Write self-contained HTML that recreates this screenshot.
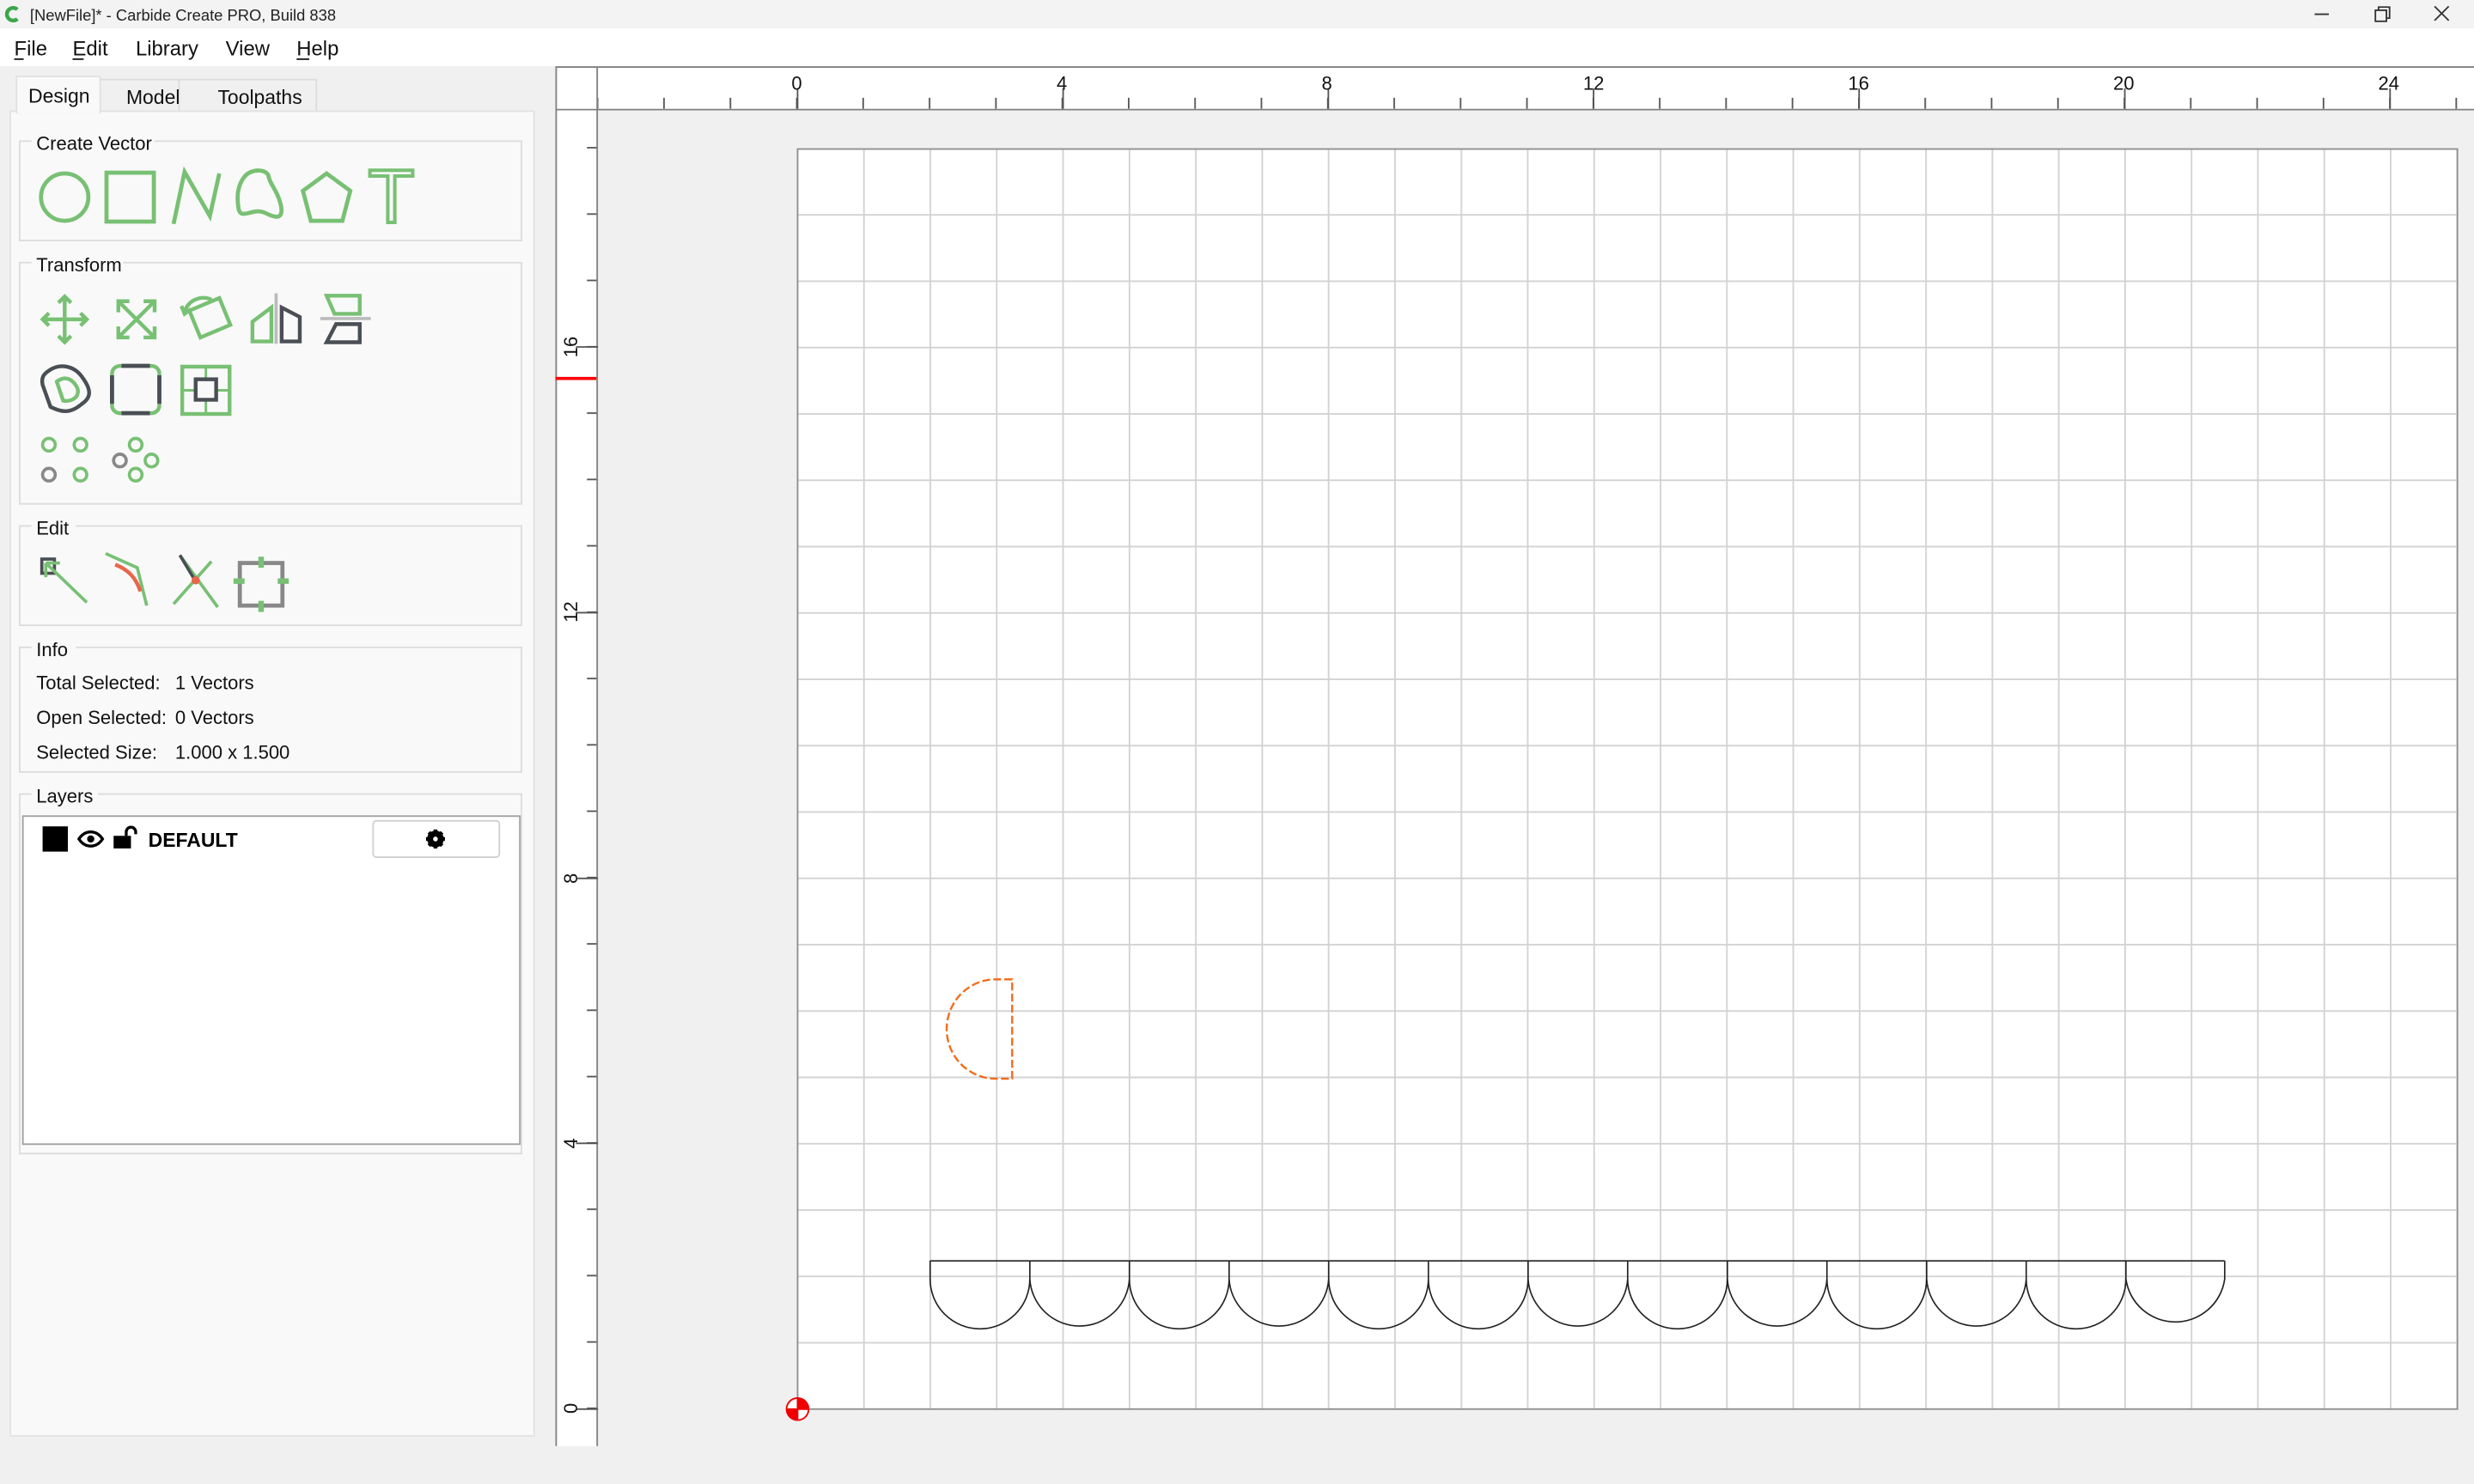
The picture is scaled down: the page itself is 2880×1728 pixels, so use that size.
<!DOCTYPE html>
<html><head><meta charset="utf-8"><style>
html,body{margin:0;padding:0;width:2880px;height:1728px;overflow:hidden;background:#f0f0f0}
svg{display:block}
text{font-family:"Liberation Sans",sans-serif}
</style></head><body>
<svg width="2880" height="1728" viewBox="0 0 1568 941" preserveAspectRatio="none">
<defs>
<pattern id="grid" patternUnits="userSpaceOnUse" x="505" y="893" width="42.07" height="42.07">
<path d="M0.5 0V42.07M0 0.5H42.07" stroke="#d2d2d2" stroke-width="1" fill="none"/>
</pattern>
<pattern id="tt" patternUnits="userSpaceOnUse" x="504.5" y="0" width="42.07" height="941">
<path d="M0.5 62V69" stroke="#555" stroke-width="1"/>
</pattern>
<pattern id="lt" patternUnits="userSpaceOnUse" x="0" y="892.5" width="1568" height="42.07">
<path d="M372 0.5H379" stroke="#555" stroke-width="1"/>
</pattern>
</defs>
<!-- title bar -->
<rect x="0" y="0" width="1568" height="18" fill="#f3f3f3"/>
<path d="M11 6 A4 4 0 1 0 11 12" stroke="#3aa64a" stroke-width="2.4" fill="none"/>
<text x="19" y="13" font-size="10" fill="#222">[NewFile]* - Carbide Create PRO, Build 838</text>
<path d="M1467 9H1476" stroke="#333" stroke-width="1"/>
<rect x="1505.5" y="6.5" width="7" height="7" fill="none" stroke="#333"/><path d="M1507.5 6.5V4.5H1514.5V11.5H1512.5" fill="none" stroke="#333"/>
<path d="M1543 4L1552 13M1552 4L1543 13" stroke="#333" stroke-width="1"/>
<!-- menu -->
<rect x="0" y="18" width="1568" height="24" fill="#fff"/>
<g font-size="13" fill="#111">
<text x="9" y="35">File</text><text x="46" y="35">Edit</text><text x="86" y="35">Library</text><text x="143" y="35">View</text><text x="188" y="35">Help</text>
</g>
<path d="M9 37.5H15M46 37.5H53M188 37.5H196" stroke="#111" stroke-width="1"/>
<!-- tabs -->
<rect x="63.5" y="50.5" width="50" height="20" fill="#f0f0f0" stroke="#ddd"/>
<rect x="113.5" y="50.5" width="87" height="20" fill="#f0f0f0" stroke="#ddd"/>
<rect x="6.5" y="70.5" width="332" height="840" fill="#f9f9f9" stroke="#e2e2e2"/>
<rect x="10.5" y="48.5" width="53" height="23" fill="#f9f9f9" stroke="#e2e2e2"/>
<rect x="11" y="70" width="52" height="2" fill="#f9f9f9"/>
<g font-size="12.5" fill="#111">
<text x="18" y="65">Design</text><text x="80" y="66">Model</text><text x="138" y="66">Toolpaths</text>
</g>
<!-- group boxes -->
<g fill="none" stroke="#dcdcdc">
<rect x="12.5" y="89.5" width="318" height="63"/>
<rect x="12.5" y="166.5" width="318" height="153"/>
<rect x="12.5" y="333.5" width="318" height="63"/>
<rect x="12.5" y="410.5" width="318" height="79"/>
<rect x="12.5" y="503.5" width="318" height="228"/>
</g>
<g fill="#f9f9f9">
<rect x="20" y="83" width="78" height="12"/><rect x="20" y="160" width="58" height="12"/>
<rect x="20" y="327" width="28" height="12"/><rect x="20" y="404" width="28" height="12"/><rect x="20" y="497" width="42" height="12"/>
</g>
<g font-size="12" fill="#111">
<text x="23" y="95">Create Vector</text><text x="23" y="172">Transform</text><text x="23" y="339">Edit</text><text x="23" y="416">Info</text><text x="23" y="509">Layers</text>
<text x="23" y="437">Total Selected:</text><text x="111" y="437">1 Vectors</text>
<text x="23" y="459">Open Selected:</text><text x="111" y="459">0 Vectors</text>
<text x="23" y="481">Selected Size:</text><text x="111" y="481">1.000 x 1.500</text>
</g>
<!-- create vector icons -->
<g fill="none" stroke="#78c074" stroke-width="2.6">
<circle cx="41" cy="125" r="15"/>
<rect x="67.5" y="109.5" width="30" height="31"/>
<path d="M110 142L117 109L133 137L139 110"/>
<path d="M155 112C159 107 168 107 170 111C171 117 176 121 178 130C180 140 174 138 168 135C160 131 152 141 151 131C150 124 151 117 155 112Z"/>
<path d="M207 110L222 121L217 140H197L192 121Z"/>
</g>
<text x="248" y="141" font-family="Liberation Serif,serif" font-size="48" fill="#f9f9f9" stroke="#78c074" stroke-width="2.2" text-anchor="middle">T</text>
<!-- transform icons -->
<g fill="none" stroke="#78c074" stroke-width="2.4">
<path d="M41 188V217M27 202.5H55M37 192L41 188L45 192M37 213L41 217L45 213M31 198.5L27 202.5L31 206.5M51 198.5L55 202.5L51 206.5"/>
<path d="M75 191L98 214M98 191L75 214M75 198V191H82M91 191H98V198M75 207V214H82M91 214H98V207"/>
<path d="M120 197L139 189L146 206L127 214Z"/><path d="M117 198C119 190 128 187 134 190M115 194L117 199L121 196"/>
</g>
<path d="M175 186V218" stroke="#bbb" stroke-width="2"/>
<path d="M172 216.5H160V204L172 195Z" fill="none" stroke="#78c074" stroke-width="2.4"/>
<path d="M178.5 216.5H190V201L178.5 195Z" fill="none" stroke="#4a4f55" stroke-width="2.4"/>
<path d="M203 202H235" stroke="#bbb" stroke-width="2"/>
<path d="M207 187.5H228V199H212Z" fill="none" stroke="#78c074" stroke-width="2.4"/>
<path d="M213 205.5H228V217H207Z" fill="none" stroke="#4a4f55" stroke-width="2.4"/>
<path d="M31 235C38 230 47 232 52 239C58 247 58 252 52 256C44 263 38 261 32 258L27 244C26 239 28 237 31 235Z" fill="none" stroke="#4a4f55" stroke-width="2.4"/>
<path d="M36 242C41 238 46 240 49 246C51 252 45 255 40 254Z" fill="none" stroke="#78c074" stroke-width="2.4"/>
<rect x="71" y="232" width="30" height="30" rx="5" fill="none" stroke="#78c074" stroke-width="2.4"/>
<path d="M77 232H95M77 262H95M71 238V256M101 238V256" stroke="#4a4f55" stroke-width="2.6"/>
<rect x="115.5" y="232.5" width="30" height="30" fill="none" stroke="#78c074" stroke-width="2.4"/>
<path d="M130.5 232V262M115 247.5H146" stroke="#78c074" stroke-width="1.6"/>
<rect x="124" y="240.5" width="13" height="13" fill="#f9f9f9" stroke="#4a4f55" stroke-width="2.4"/>
<circle cx="31" cy="282" r="4" fill="none" stroke="#78c074" stroke-width="2"/>
<circle cx="51" cy="282" r="4" fill="none" stroke="#78c074" stroke-width="2"/>
<circle cx="31" cy="301" r="4" fill="none" stroke="#888" stroke-width="2"/>
<circle cx="51" cy="301" r="4" fill="none" stroke="#78c074" stroke-width="2"/>
<circle cx="86" cy="282" r="4" fill="none" stroke="#78c074" stroke-width="2"/>
<circle cx="76" cy="292" r="4" fill="none" stroke="#888" stroke-width="2"/>
<circle cx="96" cy="292" r="4" fill="none" stroke="#78c074" stroke-width="2"/>
<circle cx="86" cy="301" r="4" fill="none" stroke="#78c074" stroke-width="2"/>
<!-- edit icons -->
<rect x="26.5" y="354.5" width="8" height="9" fill="none" stroke="#4a4f55" stroke-width="2"/>
<path d="M29 357L55 382M29 357H38M29 357V366" fill="none" stroke="#78c074" stroke-width="2"/>
<path d="M67 351L87 360L93 384" fill="none" stroke="#78c074" stroke-width="2"/>
<path d="M73 358C81 361 86 366 89 375" fill="none" stroke="#e8664a" stroke-width="2.4"/>
<path d="M110 383L134 356M114 352L138 385" stroke="#78c074" stroke-width="2"/>
<path d="M114 352L123 367" stroke="#4a4f55" stroke-width="2"/>
<circle cx="124" cy="368" r="2.6" fill="#e8664a"/>
<rect x="152" y="357" width="27" height="27" fill="none" stroke="#888" stroke-width="2.6"/>
<path d="M165.5 353V360M165.5 381V388M148 368.5H155M176 368.5H183" stroke="#78c074" stroke-width="3.5"/>
<!-- layers list -->
<rect x="14.5" y="517.5" width="315" height="208" fill="#fff" stroke="#a0a0a0"/>
<rect x="27" y="524" width="16" height="16" fill="#000"/>
<path d="M50 532C54 526 61 526 65 532C61 538 54 538 50 532Z" fill="none" stroke="#000" stroke-width="1.8"/>
<circle cx="57.5" cy="532" r="2.3" fill="#000"/>
<rect x="72" y="530" width="11" height="8" fill="#000"/>
<path d="M80 530V527.5A3 3 0 0 1 86 527.5V529" fill="none" stroke="#000" stroke-width="1.8"/>
<text x="94" y="537" font-size="12.5" font-weight="bold" fill="#000">DEFAULT</text>
<rect x="236.5" y="520.5" width="80" height="23" rx="2" fill="#fff" stroke="#d0d0d0"/>
<circle cx="276" cy="532" r="3.8" fill="none" stroke="#000" stroke-width="3"/>
<path d="M276 526V538M270 532H282M271.8 527.8L280.2 536.2M280.2 527.8L271.8 536.2" stroke="#000" stroke-width="2.4"/>
<circle cx="276" cy="532" r="1.5" fill="#fff"/>
<!-- canvas area -->
<rect x="352" y="43" width="1216" height="874" fill="#f0f0f0"/>
<rect x="352" y="43" width="1216" height="26" fill="#fff"/>
<rect x="352" y="43" width="27" height="874" fill="#fff"/>
<rect x="379" y="43" width="1189" height="26" fill="url(#tt)"/>
<rect x="352" y="69" width="27" height="848" fill="url(#lt)"/>
<path d="M352 69.5H1568M378.5 43V917M352.5 43V917M352 42.5H1568" stroke="#808080" stroke-width="1" fill="none"/>
<path d="M505.5 56V69M673.8 56V69M841.9 56V69M1010 56V69M1178.3 56V69M1346.7 56V69M1514.8 56V69" stroke="#555"/>
<path d="M365 893.5H379M365 725H379M365 557H379M365 388.5H379M365 220H379" stroke="#555"/>
<g font-size="12" fill="#111" text-anchor="middle">
<text x="505" y="57">0</text><text x="673" y="57">4</text><text x="841" y="57">8</text><text x="1010" y="57">12</text><text x="1178" y="57">16</text><text x="1346" y="57">20</text><text x="1514" y="57">24</text>
<text transform="translate(366 893) rotate(-90)">0</text>
<text transform="translate(366 725) rotate(-90)">4</text>
<text transform="translate(366 557) rotate(-90)">8</text>
<text transform="translate(366 388) rotate(-90)">12</text>
<text transform="translate(366 220) rotate(-90)">16</text>
</g>
<path d="M352 240H378" stroke="#f00" stroke-width="2"/>
<rect x="505" y="94" width="1052" height="799" fill="#fff"/>
<rect x="505" y="94" width="1052" height="799" fill="url(#grid)"/>
<rect x="505.5" y="94.5" width="1052" height="799" fill="none" stroke="#909090"/>
<!-- scallops -->
<path fill="none" stroke="#222" stroke-width="0.9" d="M589.5 799.5H1410M589.5 799.5V811 A31.6 31.6 0 0 0 652.7 811 A31.6 31.6 0 0 0 715.8 811 A31.6 31.6 0 0 0 779 811 A31.6 31.6 0 0 0 842.1 811 A31.6 31.6 0 0 0 905.3 811 A31.6 31.6 0 0 0 968.5 811 A31.6 31.6 0 0 0 1031.6 811 A31.6 31.6 0 0 0 1094.8 811 A31.6 31.6 0 0 0 1157.9 811 A31.6 31.6 0 0 0 1221.1 811 A31.6 31.6 0 0 0 1284.2 811 A31.6 31.6 0 0 0 1347.4 811 A31.6 31.6 0 0 0 1410 811 V799.5 M652.7 799.5V811M715.8 799.5V811M779 799.5V811M842.1 799.5V811M905.3 799.5V811M968.5 799.5V811M1031.6 799.5V811M1094.8 799.5V811M1157.9 799.5V811M1221.1 799.5V811M1284.2 799.5V811M1347.4 799.5V811"/>
<!-- D shape -->
<path d="M641.5 621H631A31 31.5 0 0 0 631 684H641.5Z" fill="none" stroke="#f26d1c" stroke-width="1.3" stroke-dasharray="5 2"/>
<!-- origin -->
<circle cx="505.5" cy="893.5" r="7" fill="#fff" stroke="#e00" stroke-width="1"/>
<path d="M505.5 893.5V886.5A7 7 0 0 1 512.5 893.5ZM505.5 893.5V900.5A7 7 0 0 1 498.5 893.5Z" fill="#e00"/>
<path d="M498.5 893.5H512.5M505.5 886.5V900.5" stroke="#e00" stroke-width="1"/>
</svg>
</body></html>
